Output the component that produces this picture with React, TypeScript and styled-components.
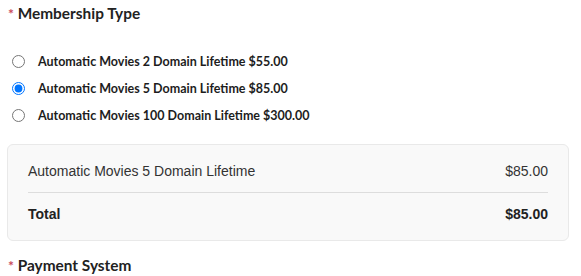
import styled, { createGlobalStyle } from "styled-components";

const GlobalStyle = createGlobalStyle`
    body {
        margin: 0;
        background: #ffffff;
        font-family: "Lato", "Liberation Sans", sans-serif;
    }
`;

type Plan = {
    id: string;
    label: string;
    price: string;
};

const plans: Plan[] = [
    { id: "m2", label: "Automatic Movies 2 Domain Lifetime", price: "$55.00" },
    { id: "m5", label: "Automatic Movies 5 Domain Lifetime", price: "$85.00" },
    { id: "m100", label: "Automatic Movies 100 Domain Lifetime", price: "$300.00" },
];

const App = () => {
    const selected = plans[1];

    return (
        <>
            <GlobalStyle />
            <StyledForm>
                <StyledHeading>
                    <span className="req">*</span> Membership Type
                </StyledHeading>

                <StyledOptions>
                    {plans.map((plan) => (
                        <StyledOption key={plan.id}>
                            <input
                                type="radio"
                                name="membership"
                                defaultChecked={plan.id === selected.id}
                            />
                            <span>{plan.label} {plan.price}</span>
                        </StyledOption>
                    ))}
                </StyledOptions>

                <StyledSummary>
                    <StyledSummaryRow>
                        <span>{selected.label}</span>
                        <span>{selected.price}</span>
                    </StyledSummaryRow>
                    <StyledSummaryRow $total>
                        <span>Total</span>
                        <span>{selected.price}</span>
                    </StyledSummaryRow>
                </StyledSummary>

                <StyledHeading $spaced>
                    <span className="req">*</span> Payment System
                </StyledHeading>
            </StyledForm>
        </>
    );
};

const StyledForm = styled.div`
    width: 581px;
    padding: 0 12px 0 7px;
    box-sizing: border-box;
`;

const StyledHeading = styled.h3<{ $spaced?: boolean }>`
    margin: ${(p) => (p.$spaced ? "11px" : "0")} 0 0 1px;
    font-family: "Lato", sans-serif;
    font-size: 15.4px;
    font-weight: 700;
    line-height: 26px;
    color: #222222;

    .req {
        color: #c94a5a;
        font-size: 14px;
    }
`;

const StyledOptions = styled.div`
    display: flex;
    flex-direction: column;
    margin-top: 21px;
`;

const StyledOption = styled.label`
    display: flex;
    align-items: center;
    height: 27px;
    font-family: "Lato", sans-serif;
    font-size: 12.5px;
    font-weight: 700;
    color: #1d1d1d;
    cursor: pointer;

    input {
        width: 13px;
        height: 13px;
        margin: 0 13px 0 5px;
    }
`;

const StyledSummary = styled.div`
    margin-top: 15px;
    padding: 5px 20px;
    background: #f9f9f9;
    border: 1px solid #e9e9e9;
    border-radius: 6px;
    font-family: "Liberation Sans", Arial, sans-serif;
    font-size: 14px;
    color: #333333;
`;

const StyledSummaryRow = styled.div<{ $total?: boolean }>`
    display: flex;
    justify-content: space-between;
    padding: 11px 0;
    line-height: 20px;
    font-weight: ${(p) => (p.$total ? 700 : 400)};
    color: ${(p) => (p.$total ? "#222222" : "#333333")};

    & + & {
        border-top: 1px solid #dddddd;
    }
`;

export default App;
